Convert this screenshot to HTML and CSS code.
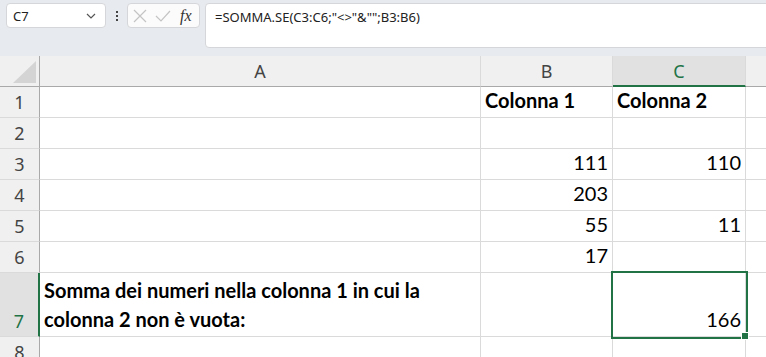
FILE: index.html
```html
<!DOCTYPE html>
<html lang="it">
<head>
    <meta charset="UTF-8">
    <title>Foglio di lavoro</title>
    <link rel="stylesheet" href="styles.css">
</head>
<body>
    <!-- Barra della formula -->
    <div class="toolbar">
        <div class="name-box">
            <span>C7</span>
            <svg class="chevron" width="10" height="6" viewBox="0 0 10 6"><path d="M1 1l4 4 4-4" fill="none" stroke="#555" stroke-width="1.2"/></svg>
        </div>
        <div class="dots"><i></i><i></i><i></i></div>
        <div class="fx-box">
            <svg width="14" height="14" viewBox="0 0 14 14"><path d="M1 1l12 12M13 1L1 13" stroke="#c4c4c4" stroke-width="1.2"/></svg>
            <svg width="16" height="12" viewBox="0 0 16 12"><path d="M1 6l5 5L15 1" fill="none" stroke="#c4c4c4" stroke-width="1.2"/></svg>
            <span class="fx">fx</span>
        </div>
        <div class="formula">=SOMMA.SE(C3:C6;"&lt;&gt;"&amp;"";B3:B6)</div>
    </div>

    <!-- Griglia -->
    <div class="sheet">
        <div class="corner"><span class="tri"></span></div>
        <div class="col-head">A</div>
        <div class="col-head">B</div>
        <div class="col-head active">C</div>
        <div class="col-head last"></div>

        <div class="row-head">1</div>
        <div class="cell"></div>
        <div class="cell bold">Colonna 1</div>
        <div class="cell bold">Colonna 2</div>
        <div class="cell last"></div>

        <div class="row-head">2</div>
        <div class="cell"></div>
        <div class="cell"></div>
        <div class="cell"></div>
        <div class="cell last"></div>

        <div class="row-head">3</div>
        <div class="cell"></div>
        <div class="cell num">111</div>
        <div class="cell num">110</div>
        <div class="cell last"></div>

        <div class="row-head">4</div>
        <div class="cell"></div>
        <div class="cell num">203</div>
        <div class="cell num"></div>
        <div class="cell last"></div>

        <div class="row-head">5</div>
        <div class="cell"></div>
        <div class="cell num">55</div>
        <div class="cell num">11</div>
        <div class="cell last"></div>

        <div class="row-head">6</div>
        <div class="cell"></div>
        <div class="cell num">17</div>
        <div class="cell num"></div>
        <div class="cell last"></div>

        <div class="row-head active">7</div>
        <div class="cell bold wrap">Somma dei numeri nella colonna 1 in cui la colonna 2 non è vuota:</div>
        <div class="cell"></div>
        <div class="cell num selected">166</div>
        <div class="cell last"></div>

        <div class="row-head">8</div>
        <div class="cell"></div>
        <div class="cell"></div>
        <div class="cell"></div>
        <div class="cell last"></div>
    </div>
</body>
</html>
```

FILE: styles.css
```css
* {
    margin: 0;
    padding: 0;
    box-sizing: border-box;
}

body {
    width: 766px;
    height: 357px;
    overflow: hidden;
    background-color: #fff;
    font-family: 'Noto Sans', sans-serif;
}

/* Barra della formula */
.toolbar {
    height: 56px;
    background-color: #e7eaee;
    display: flex;
    align-items: flex-start;
    padding: 3px 0 0 6px;
}

.name-box {
    width: 100px;
    height: 25px;
    background-color: #fff;
    border: 1px solid #d4d6d9;
    border-radius: 4px;
    display: flex;
    align-items: center;
    justify-content: space-between;
    padding: 0 9px 0 6px;
    font-size: 13px;
    color: #222;
}

.dots {
    width: 21px;
    height: 25px;
    display: flex;
    flex-direction: column;
    align-items: center;
    justify-content: center;
    gap: 2px;
}

.dots i {
    width: 2px;
    height: 2px;
    background-color: #444;
}

.fx-box {
    width: 73px;
    height: 25px;
    background-color: #fbfbfb;
    border: 1px solid #d4d6d9;
    border-radius: 4px;
    display: flex;
    align-items: center;
    gap: 8px;
    padding-left: 5px;
}

.fx {
    font-family: 'Liberation Serif', serif;
    font-style: italic;
    font-size: 16px;
    color: #333;
    margin-left: 1px;
}

.formula {
    flex: 1;
    height: 45px;
    margin-left: 5px;
    margin-right: -10px;
    background-color: #fff;
    border: 1px solid #d4d6d9;
    border-radius: 4px;
    padding: 4px 0 0 9px;
    font-size: 13px;
    color: #222;
}

/* Griglia */
.sheet {
    display: grid;
    grid-template-columns: 40px 441px 132px 133px 1fr;
    grid-template-rows: 31px repeat(6, 31px) 64px 31px;
}

.corner,
.col-head {
    background-color: #f0f0f0;
    border-bottom: 1px solid #a9a9a9;
}

.corner {
    border-right: 1px solid #a9a9a9;
    position: relative;
}

.tri {
    position: absolute;
    right: 3px;
    bottom: 3px;
    width: 0;
    height: 0;
    border-left: 23px solid transparent;
    border-bottom: 22px solid #d4d4d4;
}

.col-head {
    border-right: 1px solid #dadada;
    display: flex;
    align-items: center;
    justify-content: center;
    font-size: 18px;
    color: #444;
}

.col-head.active {
    background-color: #e1e1e1;
    color: #217346;
    border-bottom: 2px solid #217346;
}

.col-head.last,
.cell.last {
    border-right: none;
}

.row-head {
    background-color: #f0f0f0;
    border-right: 1px solid #a9a9a9;
    border-bottom: 1px solid #dadada;
    display: flex;
    align-items: flex-end;
    justify-content: center;
    padding-bottom: 3px;
    font-size: 18px;
    color: #444;
}

.row-head.active {
    background-color: #e1e1e1;
    color: #217346;
    border-right: 2px solid #217346;
}

.cell {
    border-right: 1px solid #dadada;
    border-bottom: 1px solid #dadada;
    display: flex;
    align-items: flex-end;
    padding: 0 4px 2px 4px;
    font-family: 'Lato', sans-serif;
    font-size: 20px;
    line-height: 29px;
    color: #000;
    white-space: nowrap;
}

.bold {
    font-weight: bold;
}

.num {
    justify-content: flex-end;
}

.wrap {
    white-space: normal;
}

.selected {
    position: relative;
    outline: 2px solid #217346;
    outline-offset: 0;
}

.selected::after {
    content: '';
    position: absolute;
    right: -4px;
    bottom: -4px;
    width: 6px;
    height: 6px;
    background-color: #217346;
    border: 1px solid #fff;
}
```
